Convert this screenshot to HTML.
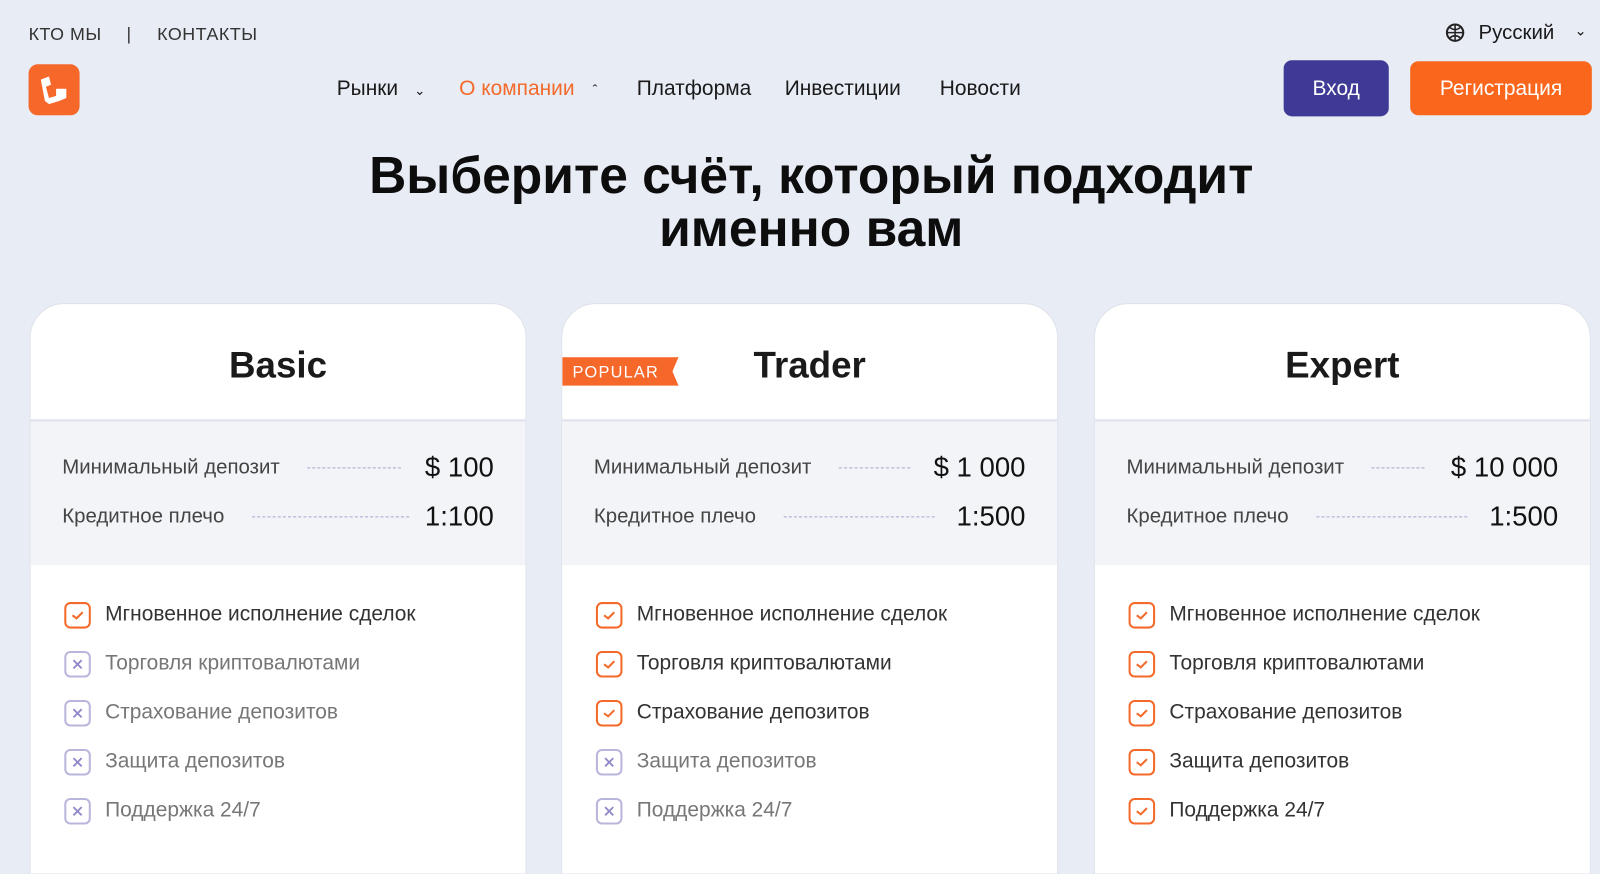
<!DOCTYPE html>
<html><head><meta charset="utf-8"><style>
*{margin:0;padding:0;box-sizing:border-box}
body{width:1600px;height:838px;overflow:hidden;background:#e8ecf5;font-family:"Liberation Sans",sans-serif;color:#1a1a1a;position:relative}
#w{position:absolute;left:0;top:0;width:1568px;height:822px;transform:scale(1.0204);transform-origin:0 0}
.a{position:absolute;white-space:nowrap}
.top{font-size:17.5px;color:#333;letter-spacing:.5px;top:23px}
.nav{font-size:20.5px;top:75px;color:#1a1a1a}
.card{position:absolute;top:297px;width:487px;height:560px;background:#fff;border-radius:34px 34px 0 0;overflow:hidden;border:1px solid #dfe3ec}
.card h2{position:absolute;top:39px;left:0;right:0;text-align:center;font-size:36px;font-weight:bold}
.stats{position:absolute;top:113px;left:0;right:0;height:143px;background:#f3f4f8;border-top:2px solid #dde1ea}
.row{position:absolute;left:31px;right:31px;height:30px;font-size:20px;color:#444}
.row .l{position:absolute;left:0;top:4px}
.row .v{position:absolute;right:0;top:0;font-size:27px;color:#111}
.row .d{position:absolute;top:15px;border-top:1px dashed #a9a4cc}
.list{position:absolute;top:292px;left:33px}
.it{height:48px;font-size:20.5px;display:flex;align-items:flex-start;color:#333}
.it .b{width:26px;height:26px;border:2px solid #f46a2a;border-radius:6px;margin-right:14px;display:flex;align-items:center;justify-content:center;flex:none}
.it.x{color:#777}
.it.x .b{border-color:#b9b6dc}
</style></head><body><div id="w">
<div class="a top" style="left:28px">КТО МЫ</div>
<div class="a top" style="left:124px">|</div>
<div class="a top" style="left:154px">КОНТАКТЫ</div>
<div class="a" style="left:28px;top:63px;width:50px;height:50px;background:#f6672a;border-radius:9px">
<svg width="50" height="50" viewBox="0 0 50 50"><path d="M12 15 L20 12 L22 20 L17 22 L20 33 L27 31 L27 24 L37 24 L37 33 L30 36 L20 39 L16 36 Z" fill="#fff"/></svg></div>
<div class="a nav" style="left:330px">Рынки <span style="font-size:13px;margin-left:10px">&#8964;</span></div>
<div class="a nav" style="left:450px;color:#f46a2a">О компании <span style="font-size:14px;margin-left:12px;color:#222">&#710;</span></div>
<div class="a nav" style="left:624px">Платформа</div>
<div class="a nav" style="left:769px">Инвестиции</div>
<div class="a nav" style="left:921px">Новости</div>
<div class="a" style="left:1416px;top:22px"><svg width="20" height="20" viewBox="0 0 20 20"><circle cx="10" cy="10" r="8" fill="none" stroke="#222" stroke-width="2"/><path d="M2 10H18M10 2V18M5 5Q10 9 15 5M5 15Q10 11 15 15" stroke="#222" stroke-width="1.5" fill="none"/></svg></div>
<div class="a" style="left:1449px;top:21px;font-size:20px">Русский</div>
<div class="a" style="left:1543px;top:22px;font-size:14px">&#8964;</div>
<div class="a" style="left:1258px;top:59px;width:103px;height:55px;background:#3f3a95;border-radius:8px;color:#fff;font-size:20.5px;text-align:center;line-height:55px">Вход</div>
<div class="a" style="left:1382px;top:60px;width:178px;height:53px;background:#f9661c;border-radius:8px;color:#fff;font-size:20.5px;text-align:center;line-height:53px">Регистрация</div>
<div class="a" style="left:0;width:1590px;top:146px;text-align:center;font-size:50.5px;font-weight:bold;line-height:52px;color:#0d0d0d">Выберите счёт, который подходит<br>именно вам</div>

<div class="card" style="left:29px">
<h2>Basic</h2>
<div class="stats">
<div class="row" style="top:30px"><span class="l">Минимальный депозит</span><span class="d" style="left:240px;width:92px"></span><span class="v">$ 100</span></div>
<div class="row" style="top:78px"><span class="l">Кредитное плечо</span><span class="d" style="left:186px;width:154px"></span><span class="v">1:100</span></div>
</div>
<div class="list">
<div class="it"><span class="b"><svg width="14" height="10"><path d="M2 5L6 8L12 2" stroke="#f46a2a" stroke-width="2" fill="none"/></svg></span>Мгновенное исполнение сделок</div>
<div class="it x"><span class="b"><svg width="10" height="10"><path d="M1 1L9 9M9 1L1 9" stroke="#8f89c9" stroke-width="1.8"/></svg></span>Торговля криптовалютами</div>
<div class="it x"><span class="b"><svg width="10" height="10"><path d="M1 1L9 9M9 1L1 9" stroke="#8f89c9" stroke-width="1.8"/></svg></span>Страхование депозитов</div>
<div class="it x"><span class="b"><svg width="10" height="10"><path d="M1 1L9 9M9 1L1 9" stroke="#8f89c9" stroke-width="1.8"/></svg></span>Защита депозитов</div>
<div class="it x"><span class="b"><svg width="10" height="10"><path d="M1 1L9 9M9 1L1 9" stroke="#8f89c9" stroke-width="1.8"/></svg></span>Поддержка 24/7</div>
</div></div>

<div class="card" style="left:550px">
<h2>Trader</h2>
<div class="a" style="left:0;top:52px"><svg width="114" height="28"><path d="M0 0H114L108 14L114 28H0Z" fill="#f6672a"/><text x="10" y="20" fill="#fff" font-family="Liberation Sans" font-size="16" letter-spacing="1.2">POPULAR</text></svg></div>
<div class="stats">
<div class="row" style="top:30px"><span class="l">Минимальный депозит</span><span class="d" style="left:240px;width:70px"></span><span class="v">$ 1 000</span></div>
<div class="row" style="top:78px"><span class="l">Кредитное плечо</span><span class="d" style="left:186px;width:148px"></span><span class="v">1:500</span></div>
</div>
<div class="list">
<div class="it"><span class="b"><svg width="14" height="10"><path d="M2 5L6 8L12 2" stroke="#f46a2a" stroke-width="2" fill="none"/></svg></span>Мгновенное исполнение сделок</div>
<div class="it"><span class="b"><svg width="14" height="10"><path d="M2 5L6 8L12 2" stroke="#f46a2a" stroke-width="2" fill="none"/></svg></span>Торговля криптовалютами</div>
<div class="it"><span class="b"><svg width="14" height="10"><path d="M2 5L6 8L12 2" stroke="#f46a2a" stroke-width="2" fill="none"/></svg></span>Страхование депозитов</div>
<div class="it x"><span class="b"><svg width="10" height="10"><path d="M1 1L9 9M9 1L1 9" stroke="#8f89c9" stroke-width="1.8"/></svg></span>Защита депозитов</div>
<div class="it x"><span class="b"><svg width="10" height="10"><path d="M1 1L9 9M9 1L1 9" stroke="#8f89c9" stroke-width="1.8"/></svg></span>Поддержка 24/7</div>
</div></div>

<div class="card" style="left:1072px">
<h2>Expert</h2>
<div class="stats">
<div class="row" style="top:30px"><span class="l">Минимальный депозит</span><span class="d" style="left:240px;width:52px"></span><span class="v">$ 10 000</span></div>
<div class="row" style="top:78px"><span class="l">Кредитное плечо</span><span class="d" style="left:186px;width:148px"></span><span class="v">1:500</span></div>
</div>
<div class="list">
<div class="it"><span class="b"><svg width="14" height="10"><path d="M2 5L6 8L12 2" stroke="#f46a2a" stroke-width="2" fill="none"/></svg></span>Мгновенное исполнение сделок</div>
<div class="it"><span class="b"><svg width="14" height="10"><path d="M2 5L6 8L12 2" stroke="#f46a2a" stroke-width="2" fill="none"/></svg></span>Торговля криптовалютами</div>
<div class="it"><span class="b"><svg width="14" height="10"><path d="M2 5L6 8L12 2" stroke="#f46a2a" stroke-width="2" fill="none"/></svg></span>Страхование депозитов</div>
<div class="it"><span class="b"><svg width="14" height="10"><path d="M2 5L6 8L12 2" stroke="#f46a2a" stroke-width="2" fill="none"/></svg></span>Защита депозитов</div>
<div class="it"><span class="b"><svg width="14" height="10"><path d="M2 5L6 8L12 2" stroke="#f46a2a" stroke-width="2" fill="none"/></svg></span>Поддержка 24/7</div>
</div></div>
</div></body></html>
